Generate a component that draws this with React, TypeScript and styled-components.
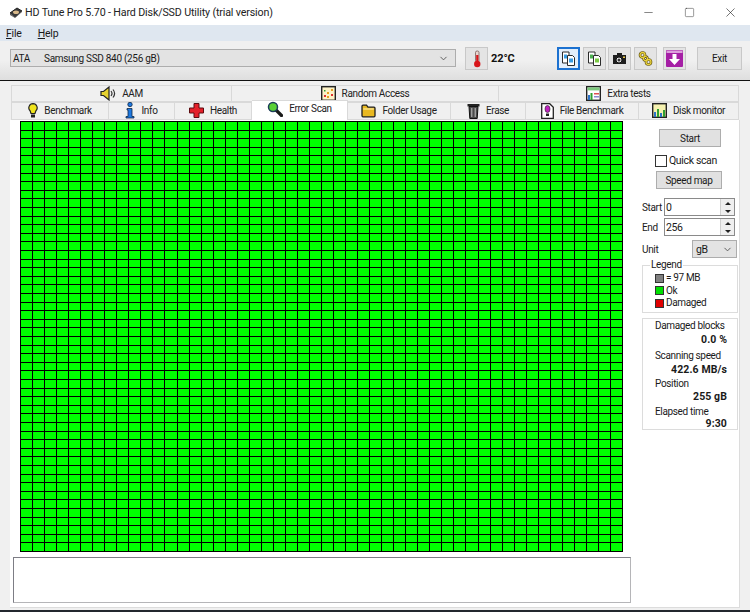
import React from 'react';
import styled, { createGlobalStyle } from 'styled-components';
import { ChevronDown, Minus, Square, X } from 'lucide-react';

const GlobalStyle = createGlobalStyle`
  html, body { margin: 0; padding: 0; background: #f0f0f0; overflow: hidden; }
  body { font-family: Roboto, "Liberation Sans", sans-serif; font-size: 10px; color: #1a1a1a; }
`;

const Page = styled.div`
  width: 750px;
  height: 612px;
  box-sizing: border-box;
  border-bottom: 2px solid #23272e;
  display: flex;
  flex-direction: column;
  overflow: hidden;
`;

const TitleBar = styled.div`
  height: 25px;
  background: #fff;
  display: flex;
  align-items: center;
  padding-left: 9px;
  gap: 2px;
  font-size: 10.7px;
  letter-spacing: -0.15px;
  color: #222;
`;

const TitleText = styled.span`
  flex: 1;
`;

const WindowButton = styled.div`
  width: 39px;
  height: 25px;
  display: flex;
  align-items: center;
  justify-content: center;
  color: #222;
`;

const MenuBar = styled.div`
  height: 16px;
  background: #dfe7f0;
  display: flex;
  align-items: center;
  padding-left: 6px;
  gap: 16px;
  font-size: 10.5px;
  letter-spacing: -0.2px;
`;

const MenuItem = styled.span`
  &::first-letter { text-decoration: underline; }
`;

const ToolBar = styled.div`
  height: 40px;
  box-sizing: border-box;
  background: linear-gradient(#f0f0f0, #f0f0f0 50%, #dedede);
  border-bottom: 1px solid #111;
  display: flex;
  align-items: flex-start;
  padding: 6px 0 0 10px;
`;

const DriveSelect = styled.div`
  width: 446px;
  height: 18px;
  box-sizing: border-box;
  border: 1px solid #adadad;
  background: #e3e3e3;
  display: flex;
  align-items: center;
  padding: 0 6px 0 2px;
  margin-top: 2px;
  font-size: 10px;
  letter-spacing: -0.3px;
`;

const DriveBus = styled.span`
  width: 31px;
`;

const DriveName = styled.span`
  flex: 1;
`;

const ToolButton = styled.div<{ $active?: boolean; $gap?: number }>`
  width: 23px;
  height: 23px;
  box-sizing: border-box;
  margin-left: ${({ $gap }) => $gap ?? 3}px;
  border: ${({ $active }) => ($active ? '2px solid #1c71d0' : '1px solid #c8c8c8')};
  background: ${({ $active }) => ($active ? '#e2eefa' : '#e4e4e4')};
  display: flex;
  align-items: center;
  justify-content: center;
  flex-shrink: 0;
`;

const Temperature = styled.span`
  margin: 5px 0 0 3px;
  width: 63px;
  font-weight: 700;
  font-size: 11px;
  letter-spacing: -0.1px;
  color: #111;
`;

const ExitButton = styled.div`
  width: 45px;
  height: 23px;
  box-sizing: border-box;
  margin-left: 11px;
  border: 1px solid #c8c8c8;
  background: #e4e4e4;
  display: flex;
  align-items: center;
  justify-content: center;
  font-size: 10px;
  letter-spacing: -0.3px;
`;

const Client = styled.div`
  flex: 1;
  padding: 4px 10px 0 11px;
  display: flex;
  flex-direction: column;
  min-height: 0;
`;

const TabRow = styled.div<{ $height: number }>`
  height: ${({ $height }) => $height}px;
  display: flex;
  align-items: stretch;
`;

const Tab = styled.div<{ $width: number; $active?: boolean }>`
  width: ${({ $width }) => $width}px;
  box-sizing: border-box;
  display: flex;
  align-items: center;
  justify-content: center;
  gap: 6px;
  background: ${({ $active }) => ($active ? '#fff' : '#f0f0f0')};
  border: 1px solid #d9d9d9;
  border-left-width: 0;
  border-bottom-width: ${({ $active }) => ($active ? 0 : 1)}px;
  font-size: 10px;
  letter-spacing: -0.35px;
  color: #222;
  position: relative;
  padding-bottom: 1px;
  ${({ $active }) => ($active ? 'margin-top: -2px; padding-bottom: 4px; z-index: 1;' : '')}
  &:first-child { border-left-width: 1px; }
`;

const Panel = styled.div`
  width: 730px;
  margin-left: -1px;
  height: 488px;
  box-sizing: border-box;
  background: #fff;
  border-right: 1px solid #dcdcdc;
  border-bottom: 1px solid #dcdcdc;
  display: grid;
  grid-template-columns: 622px 1fr;
  grid-template-rows: 437px 1fr;
`;

const MapArea = styled.div`
  grid-column: 1;
  grid-row: 1;
  padding: 1px 0 0 10px;
`;

const BlockMap = styled.div`
  width: 603px;
  height: 431px;
  display: grid;
  grid-template-columns: repeat(50, 1fr);
  grid-template-rows: repeat(50, 1fr);
  border-right: 1px solid #000;
  border-bottom: 1px solid #000;
  box-sizing: border-box;
`;

const Block = styled.div`
  background: #00ff00;
  border-left: 1px solid #000;
  border-top: 1px solid #000;
`;

const LogBox = styled.div`
  grid-column: 1;
  grid-row: 2;
  margin: 0 0 5px 3px;
  width: 618px;
  height: 46px;
  box-sizing: border-box;
  background: #fff;
  border: 1px solid #7d7d85;
  border-right-color: #b5b5b8;
  border-bottom-color: #b5b5b8;
`;

const Side = styled.div`
  grid-column: 2;
  grid-row: 1 / span 2;
  padding: 9px 0 0 10px;
  display: flex;
  flex-direction: column;
  letter-spacing: -0.35px;
`;

const PushButton = styled.div<{ $width: number; $left: number }>`
  width: ${({ $width }) => $width}px;
  margin-left: ${({ $left }) => $left}px;
  box-sizing: border-box;
  height: 18px;
  border: 1px solid #adadad;
  background: #e1e1e1;
  display: flex;
  align-items: center;
  justify-content: center;
  font-size: 10px;
`;

const CheckRow = styled.div`
  height: 13px;
  margin: 7px 0 4px 13px;
  display: flex;
  align-items: center;
  gap: 2px;
  font-size: 10.5px;
`;

const CheckBox = styled.span`
  width: 12px;
  height: 12px;
  box-sizing: border-box;
  border: 1px solid #333;
  background: #fff;
`;

const FieldRow = styled.div<{ $top: number }>`
  display: flex;
  align-items: center;
  height: 18px;
  margin-top: ${({ $top }) => $top}px;
  font-size: 10px;
`;

const FieldLabel = styled.span`
  width: 22px;
`;

const SpinBox = styled.div`
  width: 71px;
  height: 18px;
  box-sizing: border-box;
  border: 1px solid #8a8a8a;
  background: #fff;
  display: flex;
  align-items: center;
  padding-left: 1px;
  font-size: 10.5px;
`;

const SpinValue = styled.span`
  flex: 1;
`;

const SpinArrows = styled.span`
  width: 13px;
  height: 16px;
  display: flex;
  flex-direction: column;
  background: #efefef;
  border-left: 1px solid #d0d0d0;
`;

const SpinArrow = styled.span<{ $up?: boolean }>`
  flex: 1;
  display: flex;
  align-items: center;
  justify-content: center;
  &::before {
    content: '';
    border-left: 3px solid transparent;
    border-right: 3px solid transparent;
    ${({ $up }) => ($up ? 'border-bottom: 3px solid #222;' : 'border-top: 3px solid #222;')}
  }
`;

const UnitLabel = styled.span`
  width: 50px;
`;

const UnitSelect = styled.div`
  width: 45px;
  height: 18px;
  box-sizing: border-box;
  border: 1px solid #adadad;
  background: #e3e3e3;
  display: flex;
  align-items: center;
  justify-content: space-between;
  padding: 0 3px;
  font-size: 10.5px;
`;

const Legend = styled.fieldset`
  width: 96px;
  height: 53px;
  box-sizing: border-box;
  margin: 2px 0 0;
  padding: 2px 0 0 12px;
  border: 1px solid #dcdcdc;
  font-size: 10px;
  line-height: 12.5px;
  legend { padding: 0 1px; margin-left: -5px; font-size: 10px; line-height: 10px; }
`;

const LegendRow = styled.div`
  display: flex;
  align-items: center;
  gap: 1px;
`;

const Swatch = styled.span<{ $color: string }>`
  width: 7px;
  height: 7px;
  background: ${({ $color }) => $color};
  border: 1px solid #333;
  margin-right: 1px;
`;

const Stats = styled.div`
  width: 96px;
  height: 112px;
  box-sizing: border-box;
  margin-top: 5px;
  border: 1px solid #dcdcdc;
  padding: 0 10px 0 12px;
  font-size: 10px;
`;

const StatLabel = styled.div`
  line-height: 13px;
  white-space: nowrap;
`;

const StatValue = styled.div<{ $top: number; $bottom: number }>`
  text-align: right;
  font-weight: 700;
  font-size: 10.5px;
  letter-spacing: 0.1px;
  line-height: 14px;
  margin-top: ${({ $top }) => $top}px;
  margin-bottom: ${({ $bottom }) => $bottom}px;
`;

const IconSvg = styled.svg`
  display: block;
  flex-shrink: 0;
`;

const DriveIcon = () => (
  <IconSvg width="14" height="14" viewBox="0 0 14 14">
    <path d="M1 7 8 2l5 3-7 6z" fill="#3a3a3a" stroke="#222" />
    <path d="M1 7v2l5 3 7-6V5l-7 6z" fill="#666" />
    <ellipse cx="7" cy="6.200" rx="3" ry="1.800" fill="#d9b98a" />
  </IconSvg>
);

const ThermoIcon = () => (
  <IconSvg width="12" height="18" viewBox="0 0 12 18">
    <rect x="4.500" y="1" width="3.500" height="11" rx="1.500" fill="#e9d6d0" stroke="#6b4a48" strokeWidth=".7" />
    <rect x="5.200" y="5" width="2.200" height="8" fill="#d8161b" />
    <circle cx="6.250" cy="14" r="3.200" fill="#d8161b" />
  </IconSvg>
);

const PagesIcon = ({ accent, second }: { accent: string; second: string }) => (
  <IconSvg width="15" height="16" viewBox="0 0 15 16">
    <path d="M1.500 1h6.500v11H1.500z" fill="#fff" stroke="#2b2b2b" />
    <path d="M6.500 4.500h5l2 2v8h-7z" fill="#fff" stroke="#2b2b2b" />
    <rect x="3" y="3.500" width="3" height="4" fill={accent} />
    <rect x="8" y="7.500" width="4" height="4" fill={second} />
  </IconSvg>
);

const CameraIcon = () => (
  <IconSvg width="15" height="13" viewBox="0 0 15 13">
    <path d="M5 1h5v2h4v9H1V3h4z" fill="#1e1e1e" />
    <circle cx="7" cy="8" r="3" fill="#eee" stroke="#111" />
    <circle cx="7" cy="8" r="1.500" fill="#333" />
    <rect x="11" y="4.500" width="2" height="1.500" fill="#e8c64a" />
  </IconSvg>
);

const LinkIcon = () => (
  <IconSvg width="15" height="15" viewBox="0 0 15 15">
    <circle cx="4.500" cy="4" r="2.500" fill="none" stroke="#5a4c10" strokeWidth="2.600" />
    <circle cx="10.500" cy="11" r="2.500" fill="none" stroke="#5a4c10" strokeWidth="2.600" />
    <circle cx="7.500" cy="7.500" r="2" fill="none" stroke="#5a4c10" strokeWidth="2.400" />
    <circle cx="4.500" cy="4" r="2.500" fill="none" stroke="#ead33c" strokeWidth="1.300" />
    <circle cx="10.500" cy="11" r="2.500" fill="none" stroke="#ead33c" strokeWidth="1.300" />
    <circle cx="7.500" cy="7.500" r="2" fill="none" stroke="#ead33c" strokeWidth="1.100" />
  </IconSvg>
);

const SaveIcon = () => (
  <IconSvg width="17" height="17" viewBox="0 0 17 17">
    <rect width="17" height="17" rx="1" fill="#a51fa5" />
    <rect x=".5" y=".5" width="16" height="2.500" fill="#dca0dc" />
    <path d="M6.500 4h4v5H14l-5.500 6L3 9h3.500z" fill="#fff" />
  </IconSvg>
);

const SpeakerIcon = () => (
  <IconSvg width="16" height="15" viewBox="0 0 16 15">
    <path d="M1 5.500h2.500L9 1v13L3.500 9.500H1z" fill="#e6d22e" stroke="#222" strokeWidth="1.200" />
    <path d="M11 5c1.200 1.500 1.200 3.500 0 5M13 3.500c2 2.500 2 5.500 0 8" fill="none" stroke="#333" strokeWidth="1.200" />
  </IconSvg>
);

const RandomIcon = () => (
  <IconSvg width="15" height="15" viewBox="0 0 15 15">
    <rect x=".7" y=".7" width="13.600" height="13.600" fill="#fdf3c8" stroke="#222" strokeWidth="1.400" />
    <rect x="3" y="9" width="2" height="2" fill="#e03030" />
    <rect x="6" y="6" width="2" height="2" fill="#e8a020" />
    <rect x="10" y="3" width="2" height="2" fill="#e8a020" />
    <rect x="10" y="8" width="2" height="2" fill="#e03030" />
    <rect x="6" y="10" width="2" height="2" fill="#e8a020" />
    <rect x="3" y="4" width="1.500" height="1.500" fill="#30a030" />
  </IconSvg>
);

const ExtraIcon = () => (
  <IconSvg width="15" height="15" viewBox="0 0 15 15">
    <rect x=".7" y=".7" width="13.600" height="13.600" fill="#fff" stroke="#222" strokeWidth="1.400" />
    <rect x="1.400" y="1.400" width="12.200" height="3" fill="#7dc87d" />
    <rect x="2" y="9" width="2" height="5" fill="#2d72c8" />
    <rect x="4.500" y="7" width="2" height="7" fill="#30a030" />
    <rect x="8" y="7" width="5" height="1.500" fill="#e05050" />
    <rect x="8" y="10" width="5" height="1.500" fill="#8a8ad0" />
  </IconSvg>
);

const BulbIcon = () => (
  <IconSvg width="10" height="15" viewBox="0 0 10 15">
    <path d="M5 .7a4.200 4.200 0 0 1 2.800 7.300L7 10.500H3L2.200 8A4.200 4.200 0 0 1 5 .7z" fill="#f0e41c" stroke="#222" strokeWidth="1.200" />
    <rect x="3" y="11.500" width="4" height="3" fill="#222" />
  </IconSvg>
);

const InfoIcon = () => (
  <IconSvg width="10" height="17" viewBox="0 0 10 17">
    <circle cx="5" cy="2.500" r="2.200" fill="#1d78e0" stroke="#102848" strokeWidth=".8" />
    <path d="M2 6.500h5v8h2V16H1v-1.500h2V8H2z" fill="#1d78e0" stroke="#102848" strokeWidth=".8" />
  </IconSvg>
);

const CrossIcon = () => (
  <IconSvg width="15" height="15" viewBox="0 0 15 15">
    <path d="M5 .5h5v4.500h4.500v5H10v4.500H5V10H.5V5H5z" fill="#e3202a" stroke="#5c0c10" />
  </IconSvg>
);

const LensIcon = () => (
  <IconSvg width="16" height="16" viewBox="0 0 16 16">
    <path d="M9 9l5.500 5.500" stroke="#1a1a1a" strokeWidth="3.200" strokeLinecap="round" />
    <circle cx="6" cy="6" r="4.500" fill="#58d034" stroke="#1c3c58" strokeWidth="1.500" />
  </IconSvg>
);

const FolderIcon = () => (
  <IconSvg width="15" height="14" viewBox="0 0 15 14">
    <path d="M1 2.200q0-1 1-1h3.500l1.500 2h6q1 0 1 1v7.600q0 1-1 1H2q-1 0-1-1z" fill="#e8b820" stroke="#1e1e1e" strokeWidth="1.300" />
    <path d="M2.200 5h10.600" stroke="#fbe9a0" strokeWidth="1.200" />
  </IconSvg>
);

const TrashIcon = () => (
  <IconSvg width="13" height="16" viewBox="0 0 13 16">
    <rect x=".5" y="1" width="12" height="2.500" fill="#222" />
    <path d="M2 3.500h9l-.8 12H2.800z" fill="#4a4a4a" stroke="#111" />
    <path d="M4.800 5v9M8.200 5v9" stroke="#c4c4c4" />
  </IconSvg>
);

const FileBenchIcon = () => (
  <IconSvg width="13" height="16" viewBox="0 0 13 16">
    <path d="M.7.700h8l3.600 3.600v11H.7z" fill="#fff" stroke="#222" strokeWidth="1.300" />
    <ellipse cx="6.500" cy="6" rx="2.500" ry="3.500" fill="#c020c0" stroke="#222" strokeWidth=".6" />
    <rect x="5" y="10.500" width="3" height="2.500" fill="#222" />
  </IconSvg>
);

const MonitorIcon = () => (
  <IconSvg width="15" height="15" viewBox="0 0 15 15">
    <rect x=".7" y=".7" width="13.600" height="13.600" fill="#f6f2b0" stroke="#222" strokeWidth="1.400" />
    <rect x="2" y="9" width="2" height="5" fill="#2d72c8" />
    <rect x="5" y="6" width="2" height="8" fill="#30a030" />
    <rect x="8" y="10" width="2" height="4" fill="#2d72c8" />
    <rect x="11" y="7" width="2" height="7" fill="#30a030" />
  </IconSvg>
);

const topTabs = [
  { label: 'AAM', width: 221, icon: <SpeakerIcon /> },
  { label: 'Random Access', width: 267, icon: <RandomIcon /> },
  { label: 'Extra tests', width: 240, icon: <ExtraIcon /> },
];

const bottomTabs = [
  { label: 'Benchmark', width: 98, icon: <BulbIcon /> },
  { label: 'Info', width: 66, icon: <InfoIcon /> },
  { label: 'Health', width: 77, icon: <CrossIcon /> },
  { label: 'Error Scan', width: 96, icon: <LensIcon />, active: true },
  { label: 'Folder Usage', width: 103, icon: <FolderIcon /> },
  { label: 'Erase', width: 75, icon: <TrashIcon /> },
  { label: 'File Benchmark', width: 113, icon: <FileBenchIcon /> },
  { label: 'Disk monitor', width: 100, icon: <MonitorIcon /> },
];

const blocks = Array.from({ length: 2500 }, (_, i) => i);

export default function App() {
  return (
    <Page>
      <GlobalStyle />
      <TitleBar>
        <DriveIcon />
        <TitleText>HD Tune Pro 5.70 - Hard Disk/SSD Utility (trial version)</TitleText>
        <WindowButton><Minus size={13} strokeWidth={1} /></WindowButton>
        <WindowButton><Square size={11} strokeWidth={1} /></WindowButton>
        <WindowButton><X size={15} strokeWidth={1} /></WindowButton>
      </TitleBar>
      <MenuBar>
        <MenuItem>File</MenuItem>
        <MenuItem>Help</MenuItem>
      </MenuBar>
      <ToolBar>
        <DriveSelect>
          <DriveBus>ATA</DriveBus>
          <DriveName>Samsung SSD 840 (256 gB)</DriveName>
          <ChevronDown size={11} color="#555" />
        </DriveSelect>
        <ToolButton $gap={9}><ThermoIcon /></ToolButton>
        <Temperature>22°C</Temperature>
        <ToolButton $active><PagesIcon accent="#3a9be0" second="#3a9be0" /></ToolButton>
        <ToolButton><PagesIcon accent="#4caf50" second="#7ac943" /></ToolButton>
        <ToolButton $gap={2}><CameraIcon /></ToolButton>
        <ToolButton $gap={3}><LinkIcon /></ToolButton>
        <ToolButton $gap={6}><SaveIcon /></ToolButton>
        <ExitButton>Exit</ExitButton>
      </ToolBar>
      <Client>
        <TabRow $height={17}>
          {topTabs.map((t) => (
            <Tab key={t.label} $width={t.width}>{t.icon}{t.label}</Tab>
          ))}
        </TabRow>
        <TabRow $height={18}>
          {bottomTabs.map((t) => (
            <Tab key={t.label} $width={t.width} $active={t.active}>{t.icon}{t.label}</Tab>
          ))}
        </TabRow>
        <Panel>
          <MapArea>
            <BlockMap>
              {blocks.map((b) => <Block key={b} />)}
            </BlockMap>
          </MapArea>
          <Side>
            <PushButton $width={62} $left={17}>Start</PushButton>
            <CheckRow><CheckBox />Quick scan</CheckRow>
            <PushButton $width={66} $left={14}>Speed map</PushButton>
            <FieldRow $top={9}>
              <FieldLabel>Start</FieldLabel>
              <SpinBox><SpinValue>0</SpinValue><SpinArrows><SpinArrow $up /><SpinArrow /></SpinArrows></SpinBox>
            </FieldRow>
            <FieldRow $top={2}>
              <FieldLabel>End</FieldLabel>
              <SpinBox><SpinValue>256</SpinValue><SpinArrows><SpinArrow $up /><SpinArrow /></SpinArrows></SpinBox>
            </FieldRow>
            <FieldRow $top={4}>
              <UnitLabel>Unit</UnitLabel>
              <UnitSelect>gB<ChevronDown size={11} color="#555" /></UnitSelect>
            </FieldRow>
            <Legend>
              <legend>Legend</legend>
              <LegendRow><Swatch $color="#808080" /> = 97 MB</LegendRow>
              <LegendRow><Swatch $color="#00e000" />Ok</LegendRow>
              <LegendRow><Swatch $color="#e00000" />Damaged</LegendRow>
            </Legend>
            <Stats>
              <StatLabel>Damaged blocks</StatLabel>
              <StatValue $top={1} $bottom={2}>0.0 %</StatValue>
              <StatLabel>Scanning speed</StatLabel>
              <StatValue $top={1} $bottom={0}>422.6 MB/s</StatValue>
              <StatLabel>Position</StatLabel>
              <StatValue $top={0} $bottom={1}>255 gB</StatValue>
              <StatLabel>Elapsed time</StatLabel>
              <StatValue $top={-1} $bottom={0}>9:30</StatValue>
            </Stats>
          </Side>
          <LogBox />
        </Panel>
      </Client>
    </Page>
  );
}
